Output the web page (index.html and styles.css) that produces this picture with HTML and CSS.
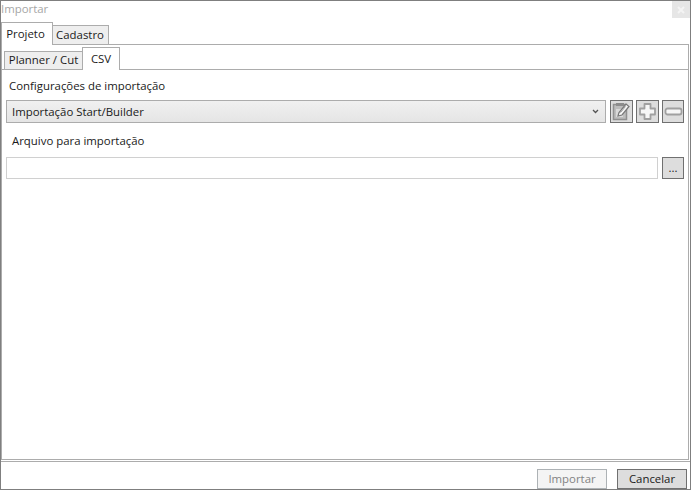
FILE: index.html
```html
<!DOCTYPE html>
<html lang="pt">
<head>
<meta charset="utf-8">
<title>Importar</title>
<link rel="stylesheet" href="styles.css">
</head>
<body>
<div class="window">
  <header class="titlebar">
    <span class="title">Importar</span>
    <span class="close"><svg width="8" height="8" viewBox="0 0 8 8"><path d="M1 1l6 6M7 1L1 7" stroke="#f4f4f4" stroke-width="2"/></svg></span>
  </header>
  <div class="outer">
    <div class="tabs outer-tabs">
      <div class="tab tab-on t-projeto">Projeto</div>
      <div class="tab t-cadastro">Cadastro</div>
    </div>
    <div class="outer-body">
      <div class="tabs inner-tabs">
        <div class="tab t-planner">Planner / Cut</div>
        <div class="tab tab-on t-csv">CSV</div>
      </div>
      <div class="inner-body">
        <div class="label l1">Configurações de importação</div>
        <div class="row r1">
          <div class="combo"><span>Importação Start/Builder</span>
            <svg class="chev" width="7" height="5" viewBox="0 0 7 5"><path d="M1 1l2.500 2.500L6 1" fill="none" stroke="#555" stroke-width="1.300"/></svg>
          </div>
          <button class="icon-btn"><svg width="21" height="21" viewBox="0 0 21 21">
            <path d="M2.500 3.500h13v15h-13z" fill="#bdbdbd" stroke="#909090" stroke-width="1.500"/>
            <path d="M5 2h8v3H5z" fill="#8c8c8c"/>
            <path d="M5 8h7v8H5z" fill="#dadada"/>
            <path d="M7 15l1-3.500 7-8.500 3 2.500-7 8.500z" fill="#f6f6f6" stroke="#777" stroke-width="1.200"/>
            <path d="M9.500 11.500l5-6" stroke="#999" stroke-width="1"/>
          </svg></button>
          <button class="icon-btn"><svg width="19" height="19" viewBox="0 0 19 19"><path d="M6.500 2h6v4.500H17v6h-4.500V17h-6v-4.500H2v-6h4.500z" fill="#f6f6f6" stroke="#a0a0a0" stroke-width="1.800" stroke-linejoin="round"/></svg></button>
          <button class="icon-btn icon-last"><svg width="19" height="19" viewBox="0 0 19 19"><rect x="1.500" y="6.500" width="16" height="6" rx="2" fill="#f6f6f6" stroke="#a0a0a0" stroke-width="1.800"/></svg></button>
        </div>
        <div class="label l2">Arquivo para importação</div>
        <div class="row r2">
          <div class="field"></div>
          <button class="dots">...</button>
        </div>
      </div>
    </div>
  </div>
  <footer class="footer">
    <button class="btn btn-off">Importar</button>
    <button class="btn">Cancelar</button>
  </footer>
</div>
</body>
</html>
```
FILE: styles.css
```css
* { box-sizing: border-box; }
html, body { margin: 0; padding: 0; background: #fff; }
body { width: 691px; height: 490px; overflow: hidden; font-family: "Open Sans", "Noto Sans", sans-serif; font-size: 11.4px; color: #1a1a1a; }
button { font: inherit; color: inherit; padding: 0; }
.window { width: 691px; height: 490px; border: 1px solid #7f7f7f; display: flex; flex-direction: column; background: #fff; }
.titlebar { height: 18px; flex: none; display: flex; justify-content: space-between; }
.title { color: #a6a6a6; line-height: 16px; }
.close { width: 18px; height: 17px; background: #e6e6e6; display: flex; align-items: center; justify-content: center; }
.outer { height: 443px; flex: none; padding: 3px 1px 0 0; display: flex; flex-direction: column; border-bottom: 1px solid #acacac; }
.tabs { display: flex; align-items: flex-end; flex: none; }
.tab { background: #eeeeee; border: 1px solid #acacac; border-bottom: 0; display: flex; align-items: center; justify-content: center; }
.tab-on { background: #fff; position: relative; z-index: 1; }
.outer-tabs { height: 23px; margin-bottom: -1px; }
.t-projeto { width: 52px; height: 23px; padding: 0 3px 1px 0; }
.t-cadastro { width: 57px; height: 20px; margin-left: -1px; padding: 0 1px 2px 0; }
.outer-body { flex: none; height: 416px; border: 1px solid #acacac; display: flex; flex-direction: column; padding-top: 2px; }
.inner-tabs { height: 23px; margin-bottom: -1px; padding-left: 2px; }
.t-planner { width: 79px; height: 19px; padding-bottom: 3px; }
.t-csv { width: 38px; height: 23px; margin-left: -1px; padding-bottom: 1px; }
.inner-body { flex: 1; border-top: 1px solid #acacac; padding: 0 4px 0 4px; }
.label { line-height: 16px; }
.l1 { margin: 8px 0 6px 3px; }
.row { display: flex; align-items: stretch; }
.r1 { height: 23px; gap: 3px; }
.combo { flex: 1; margin-right: 1px; border: 1px solid #acacac; background: linear-gradient(#f0f0f0, #e5e5e5); display: flex; align-items: center; justify-content: space-between; padding: 0 6px 0 5px; }
.chev { flex: none; }
.icon-btn { width: 23px; height: 23px; border: 1px solid #707070; background: #dddddd; display: flex; align-items: center; justify-content: center; }
.icon-last { width: 22px; }
.l2 { margin: 10px 0 8px 6px; }
.r2 { height: 22px; gap: 4px; }
.field { flex: 1; border: 1px solid #d0d0d0; background: #fff; }
.dots { width: 22px; border: 1px solid #707070; background: #dddddd; line-height: 14px; }
.footer { flex: 1; display: flex; justify-content: flex-end; align-items: flex-end; gap: 10px; padding: 0 3px 0 0; }
.btn { width: 70px; height: 20px; border: 1px solid #707070; background: #dddddd; line-height: 16px; }
.btn-off { background: #f4f4f4; border-color: #adb2b5; color: #838383; }
```
